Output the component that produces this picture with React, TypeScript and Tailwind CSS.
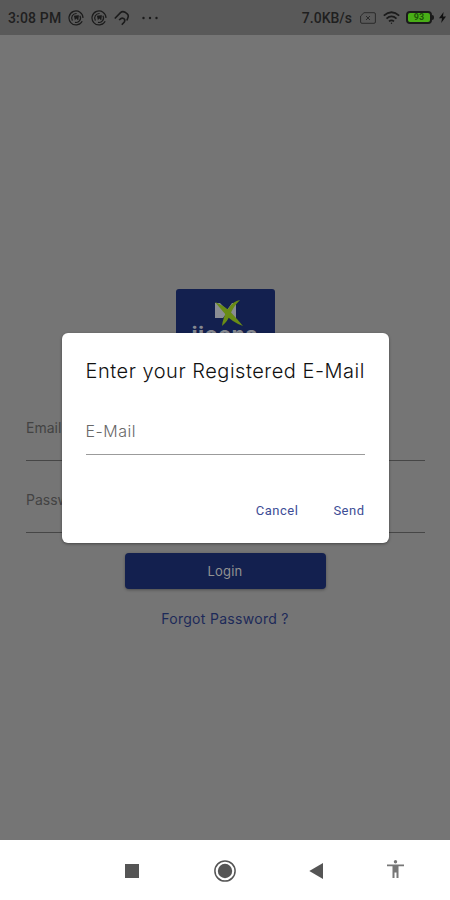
import type { ReactNode } from "react"

const statusIcon = "h-4 w-4 fill-none stroke-[#1b1b1b]"

function SwirlIcon() {
  return (
    <svg viewBox="0 0 16 16" className={statusIcon} strokeWidth="1.2">
      <path d="M14.2 11.2A7 7 0 1 1 15 8M13.6 12.2A7 7 0 0 1 11 14.4" />
      <path d="M4.4 10.6A4.6 4.6 0 0 1 8.6 3.5M11.9 5.8A4.4 4.4 0 0 1 7 12.3" />
      <path d="M6 6 10.6 5.4 10 10 8.6 8.2 6.8 9.8" fill="#1b1b1b" strokeWidth="0.5" />
    </svg>
  )
}

function StatusBar() {
  return (
    <header className="flex h-[35px] shrink-0 items-center bg-[#595959] px-2 text-[#1f1f1f]">
      <span className="w-[60px] whitespace-nowrap pt-px font-[Roboto] text-[14px] font-medium tracking-[0.15px]">3:08 PM</span>
      <div className="flex items-center gap-[7px]">
        <SwirlIcon />
        <SwirlIcon />
        <svg viewBox="0 0 16 16" className={statusIcon} strokeWidth="1.6">
          <path d="M.8 8.5 6.5 2.6Q8.5.8 11 2.2L13.2 3.8Q15 5.4 13.8 8L12.8 10.5" />
          <path d="M5.2 10.2Q7 7.3 9.5 8.4 11.7 9.8 10.3 12L7.8 14.8" />
        </svg>
      </div>
      <svg viewBox="0 0 16 4" className="ml-3 h-1 w-4 fill-[#1b1b1b]">
        <circle cx="1.5" cy="2" r="1.2" />
        <circle cx="8" cy="2" r="1.2" />
        <circle cx="14.5" cy="2" r="1.2" />
      </svg>
      <span className="ml-auto mr-2 pt-px font-[Roboto] text-[14px] font-medium">7.0KB/s</span>
      <svg viewBox="0 0 16 12" className="mr-[7px] h-3 w-4 fill-none stroke-[#2b2b2b]">
        <path d="M4 .7H14Q15.4.7 15.4 2V10Q15.4 11.3 14 11.3H2Q.6 11.3.6 10V4ZM6 4l4 4M10 4 6 8" />
      </svg>
      <svg viewBox="0 0 17 14" className="mr-[6px] h-[14px] w-[17px] fill-none stroke-[#1b1b1b]" strokeWidth="1.8">
        <path d="M.8 4.6Q8.5-2.1 16.2 4.6M3.5 7.6Q8.5 3.2 13.5 7.6M6 10.4Q8.5 8.4 11 10.4" />
        <circle cx="8.5" cy="12.3" r=".7" fill="#1b1b1b" stroke="none" />
      </svg>
      <div className="flex items-center">
        <span className="flex h-[13px] w-[26px] items-center justify-center rounded-[4px] border-2 border-[#1b1b1b] bg-[#49ae17] font-[Roboto] text-[9px] font-bold leading-none text-[#1d5708]">
          93
        </span>
        <span className="h-[5px] w-[2px] rounded-r bg-[#1b1b1b]" />
      </div>
      <svg viewBox="0 0 7 11" className="-mr-1 ml-[5px] h-[11px] w-[7px] fill-[#111]">
        <path d="M4.6 0 0 6.2H3L2.2 11 7 4.5H4Z" />
      </svg>
    </header>
  )
}

function Logo() {
  return (
    <div className="flex h-[76px] w-[99px] flex-col items-center rounded-[3px] bg-[#13204f] pt-[9px]">
      <svg viewBox="0 0 30 28" className="ml-[7px] h-7 w-[30px] shrink-0">
        <path d="M1 5H6L13 12 18 5H22V20H17L13 15 9 20H1Z" fill="#8a8d94" />
        <path d="M1 4Q11 8 17.5 15T29 28Q18 24 12 17T1 4Z" fill="#698c16" />
        <path d="M26 2Q19 9 16.5 16T8 28Q9 19 14 11T26 2Z" fill="#698c16" />
      </svg>
      <span className="-mt-1 font-[Inter] text-[20px] font-extrabold leading-6 tracking-[1px] text-[#85888f]">iioona</span>
    </div>
  )
}

function Field({ children }: { children: ReactNode }) {
  return (
    <div className="flex h-[72px] flex-col justify-end border-b border-[#464646] pb-[21px] font-[Inter] text-[14px] leading-[22px] text-[#434343]">
      {children}
    </div>
  )
}

function EmailDialog() {
  return (
    <div className="absolute inset-x-0 bottom-[60px] top-[35px] flex items-center justify-center">
      <section role="dialog" className="mt-[1px] h-[210px] w-[327px] rounded-[6px] bg-white px-6 shadow-[0_1px_3px_#0006]">
        <h1 className="whitespace-nowrap pt-[23px] font-[Inter] text-[20px] font-light leading-[30px] tracking-[0.52px] text-[#111]">
          Enter your Registered E-Mail
        </h1>
        <div className="mt-[22px] h-[47px] border-b border-[#9b9b9b] pt-[11px] font-[Inter] text-[16px] font-light leading-6 tracking-[0.5px] text-[#686868]">
          E-Mail
        </div>
        <div className="mt-[46px] flex justify-end gap-[35px] font-[Roboto] text-[13px] leading-5 tracking-[0.5px] text-[#3d4d96]">
          <button>Cancel</button>
          <button>Send</button>
        </div>
      </section>
    </div>
  )
}

function NavigationBar() {
  return (
    <nav className="flex h-[60px] shrink-0 items-center bg-white pt-px">
      <span className="ml-[125px] h-[14px] w-[14px] bg-[#555]" />
      <svg viewBox="0 0 22 22" className="ml-[75px] h-[22px] w-[22px]">
        <circle cx="11" cy="11" r="10.1" fill="none" stroke="#555" strokeWidth="1.5" />
        <circle cx="11" cy="11" r="7.2" fill="#555" />
      </svg>
      <svg viewBox="0 0 14 16" className="ml-[73px] h-4 w-[14px] fill-[#555]">
        <path d="M.3 8 14 0V16Z" />
      </svg>
      <svg viewBox="0 0 17 18" className="-mt-[3px] ml-[64px] h-[18px] w-[17px] fill-[#777]">
        <circle cx="8.5" cy="1.8" r="1.7" />
        <path d="M0 4.4H17V6.2H11.5V18H9.5V12.5H7.5V18H5.5V6.2H0Z" />
      </svg>
    </nav>
  )
}

export default function App() {
  return (
    <div className="relative flex h-[900px] w-[450px] flex-col overflow-hidden bg-[#757575]">
      <StatusBar />
      <main className="flex flex-1 flex-col items-center pt-[254px]">
        <Logo />
        <form className="mt-6 w-full pl-[26px] pr-[25px]">
          <Field>Email</Field>
          <Field>Password</Field>
        </form>
        <button className="mt-5 h-9 w-[201px] rounded-[4px] bg-[#13204f] pt-[2px] font-[Inter] text-[13px] tracking-[0.2px] text-[#929292] shadow-[0_1px_3px_#0005]">
          Login
        </button>
        <a className="mt-[19px] font-[Inter] text-[14px] leading-[22px] tracking-[0.3px] text-[#1d2a59]">Forgot Password ?</a>
      </main>
      <NavigationBar />
      <EmailDialog />
    </div>
  )
}
